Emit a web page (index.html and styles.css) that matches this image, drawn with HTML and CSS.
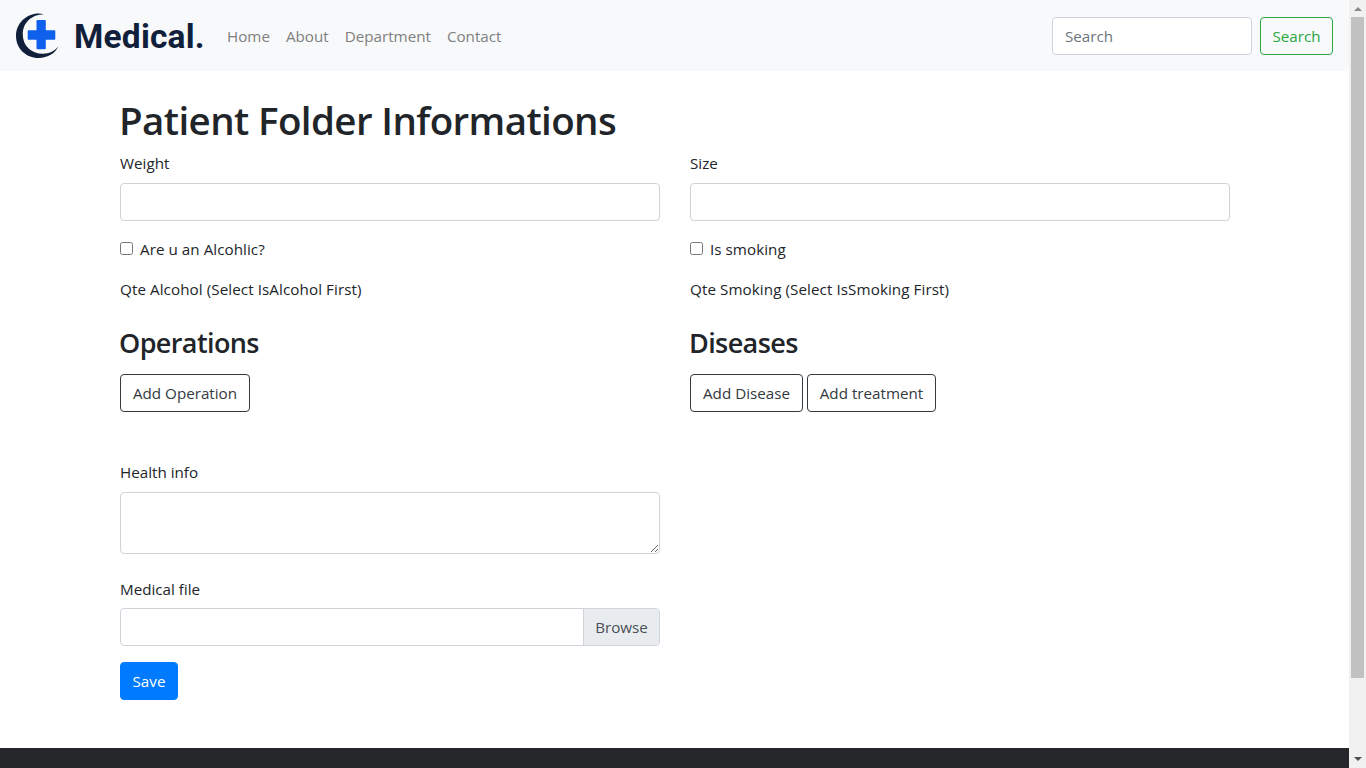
FILE: index.html
```html
<!DOCTYPE html>
<html lang="en">
<head>
<meta charset="utf-8">
<title>Medical.</title>
<link rel="stylesheet" href="styles.css">
</head>
<body>
<div class="window">
  <div class="page">
    <nav class="navbar">
      <a class="brand">
        <svg class="brand-mark" width="44" height="46" viewBox="0 0 44 46">
          <path d="M28 1.2C15-2.6 0 7.500 0 23c0 12.500 10 22 22.500 22C32 45 39 40.500 42.300 33.600 38 38.500 33 40.800 27 40.800 15 40.800 6.800 32.500 6.800 21.500 6.800 9.500 15.500 1.500 28 1.200z" fill="#11203a"/>
          <path d="M20.500 7h8.300q1 0 1 1v9.200h8.500q1 0 1 1v7.600q0 1-1 1h-8.500v8.500q0 1-1 1h-7.300q-1 0-1-1v-8.500h-7.800q-1 0-1-1v-7.600q0-1 1-1h7.800V8q0-1 1-1z" fill="#1060ee"/>
        </svg>
        <span class="brand-name">Medical.</span>
      </a>
      <div class="nav-links">
        <a>Home</a><a>About</a><a>Department</a><a>Contact</a>
      </div>
      <form class="search">
        <input class="control search-input" placeholder="Search">
        <button type="button" class="btn btn-success">Search</button>
      </form>
    </nav>
    <main class="container">
      <h1>Patient Folder Informations</h1>
      <div class="row">
        <div class="group"><label>Weight</label><input class="control"></div>
        <div class="group"><label>Size</label><input class="control"></div>
      </div>
      <div class="row row-check">
        <label class="check"><input type="checkbox"><span>Are u an Alcohlic?</span></label>
        <label class="check"><input type="checkbox"><span>Is smoking</span></label>
      </div>
      <div class="row row-qte">
        <div>Qte Alcohol (Select IsAlcohol First)</div>
        <div>Qte Smoking (Select IsSmoking First)</div>
      </div>
      <div class="row row-lists">
        <section>
          <h3>Operations</h3>
          <div class="actions"><button class="btn btn-dark w-op">Add Operation</button></div>
        </section>
        <section>
          <h3>Diseases</h3>
          <div class="actions"><button class="btn btn-dark w-dis">Add Disease</button><button class="btn btn-dark w-tr">Add treatment</button></div>
        </section>
      </div>
      <div class="row">
        <div class="column">
          <div class="group group-info"><label>Health info</label><textarea class="control area"></textarea></div>
          <div class="group group-file"><label>Medical file</label>
            <div class="control file"><span class="browse">Browse</span></div>
          </div>
          <button class="btn btn-primary">Save</button>
        </div>
      </div>
    </main>
    <footer class="footer"></footer>
  </div>
  <div class="scrollbar">
    <svg class="arrow" width="17" height="17" viewBox="0 0 17 17"><path d="M5 11h8L9 7z" fill="#8a8a8a"/></svg>
    <div class="thumb"></div>
    <svg class="arrow" width="17" height="17" viewBox="0 0 17 17"><path d="M5 6h8l-4 4z" fill="#505050"/></svg>
  </div>
</div>
</body>
</html>
```
FILE: styles.css
```css
* { box-sizing: border-box; }
body {
  margin: 0;
  overflow: hidden;
  font-family: "Open Sans", "Noto Sans", sans-serif;
  font-size: 15.2px;
  font-weight: 400;
  line-height: 24px;
  color: #212529;
  background: #fff;
}
.window { display: flex; width: 1366px; height: 768px; }
.page { display: flex; flex-direction: column; width: 1349px; height: 768px; }

.navbar {
  display: flex;
  align-items: center;
  height: 71px;
  padding: 0 16px;
  background: #f8f9fa;
}
.brand { display: flex; align-items: center; width: 203px; }
.brand-mark { flex: none; margin-right: 14px; }
.brand-name {
  padding-top: 2px;
  font-family: Roboto, sans-serif;
  font-size: 33.5px;
  font-weight: 700;
  line-height: 44px;
  color: #11203a;
  letter-spacing: 0.2px;
}
.nav-links { display: flex; gap: 16px; margin-left: 8px; padding-top: 1px; color: #7f8080; white-space: nowrap; }
.search { display: flex; gap: 8px; margin: 0 0 0 auto; }
.search-input::placeholder { color: #6c757d; opacity: 1; }

.control {
  display: block;
  width: 100%;
  height: 38px;
  padding: 6px 12px;
  border: 1px solid #ced4da;
  border-radius: 4px;
  background: #fff;
  font: inherit;
  color: #495057;
}
.search .search-input { width: 200px; }
.btn {
  height: 38px;
  padding: 0;
  border: 1px solid;
  border-radius: 4px;
  background: #fff;
  font: inherit;
  white-space: nowrap;
}
.btn-success { width: 73px; color: #28a745; border-color: #28a745; background: transparent; }
.btn-dark { color: #343a40; border-color: #343a40; }
.btn-primary { width: 58px; color: #fff; background: #007bff; border-color: #007bff; }
.w-op { width: 130px; }
.w-dis { width: 113px; }
.w-tr { width: 129px; }

.container { width: 1110px; margin-left: 120px; padding-top: 25px; }
h1 { margin: 0 0 7px -1px; font-size: 38.5px; font-weight: 600; line-height: 48px; letter-spacing: -0.6px; }
h3 { margin: 0 0 14px -1px; font-size: 27px; font-weight: 600; line-height: 34px; letter-spacing: -0.6px; }
.row { display: grid; grid-template-columns: 540px 540px; column-gap: 30px; }
.group label { display: block; margin-bottom: 8px; }
.row-check { margin-top: 16px; }
.check { display: flex; align-items: center; gap: 7px; letter-spacing: 0.05px; }
.check input { width: 13px; height: 13px; margin: 0 0 2px; }
.row-qte { margin-top: 16px; letter-spacing: 0.08px; }
.row-lists { margin-top: 25px; }
.actions { display: flex; gap: 4px; }
.row-lists + .row { margin-top: 48px; }
.area { height: 62px; resize: vertical; }
.group-info { margin-bottom: 23px; }
.group-file label { margin-bottom: 7px; }
.file { display: flex; justify-content: flex-end; padding: 0; margin-bottom: 16px; overflow: hidden; }
.browse { width: 76px; padding: 6px 0; text-align: center; border-left: 1px solid #ced4da; background: #e9ecef; }
.footer { height: 20px; margin-top: auto; background: #26272b; }

.scrollbar { display: flex; flex-direction: column; width: 17px; height: 768px; background: #f1f1f1; }
.arrow { flex: none; display: block; }
.thumb { width: 13px; height: 661px; margin: 0 2px auto; background: #c1c1c1; }
```
